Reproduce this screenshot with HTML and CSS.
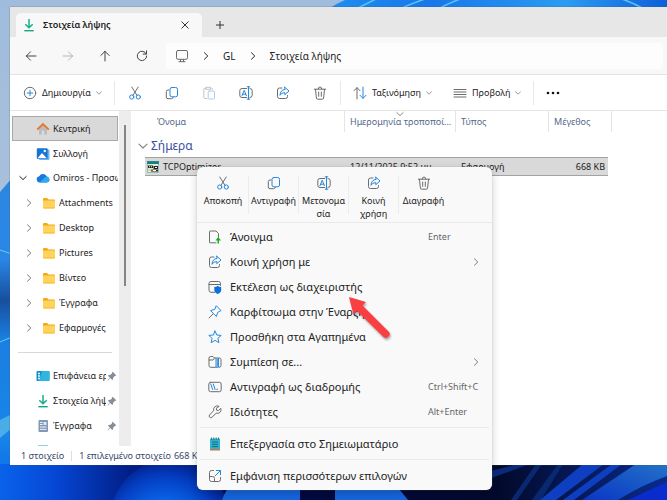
FILE: index.html
```html
<!DOCTYPE html>
<html lang="el">
<head>
<meta charset="utf-8">
<title>Στοιχεία λήψης</title>
<link rel="stylesheet" href="styles.css">
</head>
<body>
<svg class="wallpaper" viewBox="0 0 667 500" preserveAspectRatio="xMidYMid slice" aria-hidden="true">
  <defs>
    <linearGradient id="sky" x1="0" y1="0" x2="0" y2="1"><stop offset="0" stop-color="#9fbcdc"/><stop offset=".4" stop-color="#a9c0da"/></linearGradient>
    <linearGradient id="petalTop" x1="0" x2="1" y1="0" y2="0"><stop offset="0" stop-color="#1e8df0"/><stop offset=".3" stop-color="#1877ea"/><stop offset=".7" stop-color="#2b9cf2"/><stop offset="1" stop-color="#0d5fd8"/></linearGradient>
    <linearGradient id="left" x1="0" y1="0" x2="0" y2="1"><stop offset="0" stop-color="#2c86e0"/><stop offset=".25" stop-color="#2a87e6"/><stop offset=".38" stop-color="#164f9e"/><stop offset=".5" stop-color="#1b7fe0"/><stop offset=".8" stop-color="#1785ea"/><stop offset="1" stop-color="#0a62e4"/></linearGradient>
    <linearGradient id="floor" x1="0" x2="1" y1="0" y2="0"><stop offset="0" stop-color="#0a62ea"/><stop offset=".08" stop-color="#0548d6"/><stop offset=".19" stop-color="#02208a"/><stop offset=".3" stop-color="#010a4a"/><stop offset=".75" stop-color="#020a2c"/><stop offset="1" stop-color="#0a2a8c"/></linearGradient>
    <radialGradient id="orb" cx=".45" cy=".6" r=".6"><stop offset="0" stop-color="#0c8bff"/><stop offset=".35" stop-color="#0a6df2"/><stop offset=".75" stop-color="#0440c4"/><stop offset="1" stop-color="#02208c"/></radialGradient>
    <linearGradient id="blade" x1="0" y1="1" x2="1" y2="0"><stop offset="0" stop-color="#0a35c4"/><stop offset="1" stop-color="#2372c8"/></linearGradient>
  </defs>
  <rect width="667" height="500" fill="url(#sky)"/>
  <path d="M330 8Q345 -2 365 -6H667V8Z" fill="url(#petalTop)"/>
  <path d="M358 8L382 -4M402 8Q420 0 432 -3M440 8Q455 0 470 -4M612 -4Q630 1 642 8" fill="none" stroke="#5cc4f4" stroke-width="1.5"/>
  <path d="M0 192L12 178V500H0Z" fill="url(#left)"/>
  <path d="M0 250L12 254M0 342L12 337" stroke="#5fd0ee" fill="none"/>
  <path d="M0 420L12 414V428L0 438Z" fill="#49aee6"/>
  <rect y="464" width="667" height="36" fill="url(#floor)"/>
  <ellipse cx="170" cy="520" rx="60" ry="60" fill="url(#orb)"/>
  <path d="M222 500Q228 480 250 480L300 488V500ZM335 500V484H395L408 500Z" fill="#1565dc"/>
  <path d="M480 482L530 464H518L480 474Z" fill="#0a2b7c"/>
  <path d="M511 500L536 464H542L517 500ZM532 500L558 464H563L541 500Z" fill="#082970"/>
  <path d="M540 500L583 464H604L556 500ZM563 500L612 464H622L574 500Z" fill="#0d3fc0"/>
  <path d="M582 500L636 464H667V476Q640 486 618 500Z" fill="url(#blade)"/>
  <path d="M628 500L667 482V500Z" fill="#0a2ccc"/>
</svg>

<!-- Shared icon shapes -->
<svg class="sprite" aria-hidden="true">
  <symbol id="i-cut" viewBox="0 0 14 14"><path d="M3.8 1L9 9.4M10.2 1L5 9.4" class="g"/><circle cx="3.7" cy="11" r="2.1" class="b"/><circle cx="10.3" cy="11" r="2.1" class="b"/></symbol>
  <symbol id="i-copy" viewBox="0 0 14 14"><path d="M4 4H3Q1.300 4 1.300 5.700V11Q1.300 12.700 3 12.700H6.500Q8 12.700 8.300 11.200" class="g"/><rect x="5" y="1.500" width="7.500" height="9.300" rx="1.800" class="b"/></symbol>
  <symbol id="i-paste" viewBox="0 0 14 14"><path d="M5 12.500H3Q1.800 12.500 1.800 11.300V3.500Q1.800 2.300 3 2.300H4M8.500 2.300H9.500Q10.500 2.300 10.500 3.500M4 1.300H8.500V3.300H4Z" class="g"/><rect x="6.200" y="5" width="6.300" height="8" rx="1.200" class="b"/></symbol>
  <symbol id="i-rename" viewBox="0 0 14 14"><path d="M7.800 2.500H3Q.8 2.500 .8 4.700V9.300Q.8 11.500 3 11.500H7.800M11 2.500Q13.200 2.500 13.200 4.700V9.300Q13.200 11.500 11 11.500" class="g"/><path d="M3 9.700L5.200 4.300L7.400 9.700M3.700 8.200H6.700M8.200 .8H10.800M9.500 .8V13.200M8.200 13.200H10.800" class="b"/></symbol>
  <symbol id="i-share" viewBox="0 0 14 14"><path d="M6 2H3.500Q1.500 2 1.500 4V10.500Q1.500 12.500 3.500 12.500H9.500Q11.500 12.500 11.500 10.500V9.500" class="g"/><path d="M8.800 1.200L13 5L8.800 8.700V6.600Q5.500 6.500 4 9.300Q4.200 4 8.800 3.400Z" class="b"/></symbol>
  <symbol id="i-delete" viewBox="0 0 14 14"><path d="M1.300 3.200H12.700M5.200 3Q5.200 1 7 1T8.800 3M2.500 3.400L3.400 12Q3.500 13.200 4.700 13.200H9.300Q10.500 13.200 10.600 12L11.500 3.400M5.700 6V10.300M8.300 6V10.300" class="g"/></symbol>
  <symbol id="i-right" viewBox="0 0 8 8"><path d="M2.500 .8L5.800 4L2.500 7.200" class="s"/></symbol>
  <symbol id="i-down" viewBox="0 0 8 8"><path d="M.8 2.500L4 5.600L7.200 2.500" class="s"/></symbol>
  <symbol id="i-download" viewBox="0 0 14 14"><path d="M7 1V9.500M3.300 6.200L7 9.800L10.700 6.200" fill="none" stroke="#14b08a" stroke-width="1.500"/><path d="M2.300 12.700H11.700" stroke="#16a57c" stroke-width="1.400"/></symbol>
  <symbol id="i-folder" viewBox="0 0 14 12"><path d="M1 2Q1 1 2 1H5L6.500 2.500H12Q13 2.500 13 3.500V6H1Z" fill="#f3a912"/><rect x="1" y="3.500" width="12" height="8" rx="1" fill="#ffd35c"/><path d="M1 10.300H13Q13 11.500 12 11.500H2Q1 11.500 1 10.300Z" fill="#f8c243"/></symbol>
  <symbol id="i-pin" viewBox="0 0 10 10"><path d="M5.700 .8L9.200 4.300L8.200 5L7.800 4.900L6.300 6.500L6 8.300L5.200 9L3.200 7L1 9.500L.6 9L2.900 6.700L1 4.800L1.700 4L3.500 3.700L5.100 2.200L5 1.600Z" fill="#848e99"/></symbol>
</svg>

<main class="window">
  <header class="tabs">
    <div class="tab"><svg class="i14"><use href="#i-download"/></svg><span>Στοιχεία λήψης</span>
      <button class="plain close" aria-label="Κλείσιμο καρτέλας"><svg class="i8" viewBox="0 0 8 8"><path d="M.8 .8L7.200 7.200M7.200 .8L.8 7.200" class="s"/></svg></button></div>
    <button class="plain add" aria-label="Νέα καρτέλα"><svg class="i8" viewBox="0 0 8 8"><path d="M4 .2V7.800M.2 4H7.800" class="s"/></svg></button>
  </header>
  <nav class="navbar" aria-label="Περιήγηση">
    <button class="plain nav" aria-label="Πίσω"><svg class="i12" viewBox="0 0 12 12"><path d="M11 6H1.300M5.500 1.800L1.300 6L5.500 10.200" class="s"/></svg></button>
    <button class="plain nav" aria-label="Εμπρός" disabled><svg class="i12" viewBox="0 0 12 12"><path d="M1 6H10.700M6.500 1.800L10.700 6L6.500 10.200" class="s"/></svg></button>
    <button class="plain nav" aria-label="Επάνω"><svg class="i12" viewBox="0 0 12 12"><path d="M6 11V1.300M1.800 5.500L6 1.300L10.200 5.500" class="s"/></svg></button>
    <button class="plain nav" aria-label="Ανανέωση"><svg class="i12" viewBox="0 0 12 12"><path d="M10.300 4A4.700 4.700 0 1 0 10.700 6M10.500 .8V4.100H7.200" class="s"/></svg></button>
    <div class="address">
      <svg class="i14" viewBox="0 0 14 14"><rect x="1.500" y="1.500" width="11" height="8.800" rx="1.500" class="g"/><path d="M5.500 10.500V12.500M8.500 10.500V12.500M4 12.700H10" class="g"/></svg>
      <svg class="i8"><use href="#i-right"/></svg><a href="#">GL</a><svg class="i8"><use href="#i-right"/></svg><a href="#">Στοιχεία λήψης</a>
    </div>
  </nav>
  <div class="commands" role="toolbar">
    <button class="plain new"><svg class="i14" viewBox="0 0 14 14"><circle cx="7" cy="7" r="5.700" class="g"/><path d="M7 4.200V9.800M4.200 7H9.800" class="b"/></svg><span>Δημιουργία</span><svg class="i6"><use href="#i-down"/></svg></button>
    <div class="tools">
      <button class="plain" aria-label="Αποκοπή"><svg class="i14"><use href="#i-cut"/></svg></button>
      <button class="plain" aria-label="Αντιγραφή"><svg class="i14"><use href="#i-copy"/></svg></button>
      <button class="plain" aria-label="Επικόλληση" disabled><svg class="i14"><use href="#i-paste"/></svg></button>
      <button class="plain" aria-label="Μετονομασία"><svg class="i14"><use href="#i-rename"/></svg></button>
      <button class="plain" aria-label="Κοινή χρήση"><svg class="i14"><use href="#i-share"/></svg></button>
      <button class="plain" aria-label="Διαγραφή"><svg class="i14"><use href="#i-delete"/></svg></button>
    </div>
    <div class="views">
      <button class="plain sort"><svg class="i14" viewBox="0 0 14 14"><path d="M4 13V1.700M1 4.700L4 1.700L7 4.700" class="g"/><path d="M10 1V12.300M7 9.300L10 12.300L13 9.300" class="b"/></svg><span>Ταξινόμηση</span><svg class="i6"><use href="#i-down"/></svg></button>
      <button class="plain view"><svg class="i14" viewBox="0 0 14 14"><path d="M1 3.500H13M1 6H13M1 8.500H13M1 11H13" class="g"/></svg><span>Προβολή</span><svg class="i6"><use href="#i-down"/></svg></button>
    </div>
    <button class="plain more" aria-label="Περισσότερα"><svg class="i14" viewBox="0 0 14 14"><g fill="#111"><circle cx="2" cy="7" r="1.300"/><circle cx="7" cy="7" r="1.300"/><circle cx="12" cy="7" r="1.300"/></g></svg></button>
  </div>

  <div class="content">
    <aside class="side">
      <ul class="top">
        <li class="row current"><svg class="i14" viewBox="0 0 14 14"><path d="M3 6.500V12.500H5.700V8.500H8.300V12.500H11V6.500L7 3Z" fill="#b9bcc2"/><path d="M1.200 7.600L7 2L12.800 7.600" fill="none" stroke="#e8762c" stroke-width="1.900"/></svg><a href="#">Κεντρική</a></li>
        <li class="row"><svg class="i14" viewBox="0 0 14 14"><rect x="3" y="2.500" width="10.500" height="10.500" rx="1" fill="#6cb4ee"/><rect x=".8" y="1.200" width="10.800" height="10.800" rx="1" fill="#1673d2"/><path d="M1.500 11.300L6 6L10.800 11.300Z" fill="#fff"/><circle cx="8.800" cy="4" r="1.200" fill="#fff"/></svg><a href="#">Συλλογή</a></li>
      </ul>
      <ul class="tree">
        <li class="row open"><svg class="i8"><use href="#i-down"/></svg><svg class="i14" viewBox="0 0 14 14"><path d="M3.500 11.500A3.200 3.200 0 0 1 3.200 5.200A4.200 4.200 0 0 1 10.600 5.300A3.200 3.200 0 0 1 10.800 11.500Z" fill="#1679dd"/><path d="M3.500 11.500L9 6.200A3.300 3.300 0 0 1 13.700 8.800Q13.500 11.500 10.800 11.500Z" fill="#31a9f2"/></svg><a href="#">Omiros - Προσωπικό</a></li>
        <li class="row child"><svg class="i8"><use href="#i-right"/></svg><svg class="i14"><use href="#i-folder"/></svg><a href="#">Attachments</a></li>
        <li class="row child"><svg class="i8"><use href="#i-right"/></svg><svg class="i14"><use href="#i-folder"/></svg><a href="#">Desktop</a></li>
        <li class="row child"><svg class="i8"><use href="#i-right"/></svg><svg class="i14"><use href="#i-folder"/></svg><a href="#">Pictures</a></li>
        <li class="row child"><svg class="i8"><use href="#i-right"/></svg><svg class="i14"><use href="#i-folder"/></svg><a href="#">Βίντεο</a></li>
        <li class="row child"><svg class="i8"><use href="#i-right"/></svg><svg class="i14"><use href="#i-folder"/></svg><a href="#">Έγγραφα</a></li>
        <li class="row child"><svg class="i8"><use href="#i-right"/></svg><svg class="i14"><use href="#i-folder"/></svg><a href="#">Εφαρμογές</a></li>
      </ul>
      <hr>
      <ul class="pinned">
        <li class="row"><svg class="i14" viewBox="0 0 14 14"><rect x=".5" y="2" width="13" height="10" rx="1" fill="#168fc9"/><path d="M6 2H12.500Q13.500 2 13.500 3V11Q13.500 12 12.500 12H3Z" fill="#2fb5df"/><path d="M2 4.500H4M2 7H4M2 9.500H4" stroke="#e8f8ff" stroke-width="1.300"/></svg><a href="#">Επιφάνεια εργασίας</a><svg class="i10"><use href="#i-pin"/></svg></li>
        <li class="row"><svg class="i14"><use href="#i-download"/></svg><a href="#">Στοιχεία λήψης</a><svg class="i10"><use href="#i-pin"/></svg></li>
        <li class="row"><svg class="i14" viewBox="0 0 14 14"><rect x="2.500" y="1" width="9.500" height="12" rx="1" fill="#8198b6"/><path d="M4 3.500H6.500M4 5.500H6.500M4 8H10.500M4 10.300H10.500" stroke="#f2f6fb"/><rect x="7.500" y="3" width="3" height="3" fill="#dfe9f5"/></svg><a href="#">Έγγραφα</a><svg class="i10"><use href="#i-pin"/></svg></li>
        <li class="row"><svg class="i14" viewBox="0 0 14 14"><rect x="2" y="1" width="10" height="12" fill="#8fd0f3"/></svg></li>
      </ul>
    </aside>
    <div class="track"><div class="thumb"></div></div>
    <section class="files">
      <svg class="i8 sortmark"><use href="#i-down"/></svg>
      <table>
        <colgroup><col class="c-pad"><col class="c-name"><col class="c-date"><col class="c-type"><col class="c-size"><col class="c-end"><col></colgroup>
        <thead><tr><td></td><th class="name">Όνομα</th><th>Ημερομηνία τροποποί...</th><th>Τύπος</th><th class="open-end">Μέγεθος</th><td class="end"></td><td></td></tr></thead>
        <tbody>
          <tr class="group"><th colspan="7"><div><svg class="i10"><use href="#i-down"/></svg><span>Σήμερα</span></div></th></tr>
          <tr class="file"><td></td><td class="first"><div><svg class="i12" viewBox="0 0 12 12"><rect width="12" height="12" fill="#e4e8e2"/><rect width="12" height="3" fill="#12807c"/><path d="M1 4.500H6V7H1ZM6.500 5H11V8H6.500ZM4 8.500H11V10.500H4Z" fill="#222"/><path d="M2 5.800H3M4 5.800H5M8 6.500H10M6 9.500H9" stroke="#fff"/><path d="M1 9H6" stroke="#d4c530"/><rect x=".5" y=".5" width="11" height="11" fill="none" stroke="#3d8f8c" stroke-opacity=".5"/></svg><span>TCPOptimizer</span></div></td><td>12/11/2025 9:52 μμ</td><td>Εφαρμογή</td><td class="last">668 KB</td><td></td><td></td></tr>
        </tbody>
      </table>
    </section>
  </div>
  <footer class="status"><span>1 στοιχείο</span><i></i><span>1 επιλεγμένο στοιχείο</span><span>668 KB</span></footer>
</main>

<div class="menu" role="menu">
  <div class="quick">
    <button class="plain"><svg class="i14"><use href="#i-cut"/></svg><span>Αποκοπή</span></button>
    <button class="plain"><svg class="i14"><use href="#i-copy"/></svg><span>Αντιγραφή</span></button>
    <button class="plain"><svg class="i14"><use href="#i-rename"/></svg><span>Μετονομα<br>σία</span></button>
    <button class="plain"><svg class="i14"><use href="#i-share"/></svg><span>Κοινή<br>χρήση</span></button>
    <button class="plain"><svg class="i14"><use href="#i-delete"/></svg><span>Διαγραφή</span></button>
  </div>
  <div class="items">
    <button class="plain item"><svg class="i14" viewBox="0 0 14 14"><path d="M8 12.800H2Q1.500 12.800 1.500 12.300V1.500Q1.500 1 2 1H8L10.500 3.500V7" class="g"/><path d="M9.500 13.500V10.500H7.500L10.200 7L13 10.500H11V13.500Z" fill="#16b01c"/></svg><span>Άνοιγμα</span><kbd>Enter</kbd></button>
    <button class="plain item"><svg class="i14"><use href="#i-share"/></svg><span>Κοινή χρήση με</span><svg class="i8 sub"><use href="#i-right"/></svg></button>
    <button class="plain item"><svg class="i14" viewBox="0 0 14 14"><path d="M6.500 12.300H3Q1 12.300 1 10.300V3.500Q1 1.500 3 1.500H10.500Q12.500 1.500 12.500 3.500V5.500M1 4.500H12.500" class="g"/><path d="M9.700 5.700Q11 7 13.200 7V10Q13.200 12.700 9.700 14Q6.300 12.700 6.300 10V7Q8.500 7 9.700 5.700Z" fill="#0b71dc"/></svg><span>Εκτέλεση ως διαχειριστής</span></button>
    <button class="plain item"><svg class="i14" viewBox="0 0 14 14"><path d="M8.500 1L13 5.500L9.600 7.500L8.400 11.500L2.500 5.600L6.500 4.400Z" class="b"/><path d="M5.200 8.800L1 13" class="g"/></svg><span>Καρφίτσωμα στην Έναρξη</span></button>
    <button class="plain item"><svg class="i14" viewBox="0 0 14 14"><path d="M7 1L8.800 5L13.200 5.400L9.900 8.300L10.900 12.700L7 10.400L3.100 12.700L4.100 8.300L.8 5.400L5.200 5Z" class="b"/></svg><span>Προσθήκη στα Αγαπημένα</span></button>
    <button class="plain item"><svg class="i14" viewBox="0 0 14 14"><path d="M7.500 12.300H2.700Q1 12.300 1 10.600V3.200Q1 1.500 2.700 1.500H5L6.500 3H11.300Q13 3 13 4.700V10.600Q13 12.300 11.300 12.300M1 5H5L6.500 3" class="g"/><path d="M8 3.500V12.300H10.500V3.500M9.300 4V12" class="b" stroke-dasharray="2 .7"/></svg><span>Συμπίεση σε...</span><svg class="i8 sub"><use href="#i-right"/></svg></button>
    <button class="plain item"><svg class="i14" viewBox="0 0 14 14"><rect x=".8" y="2.300" width="12.400" height="9.400" rx="1.800" class="g"/><path d="M2.800 4L4.600 9.500M5.300 4L7.100 9.500M8.700 9.300H9.500" class="b"/></svg><span>Αντιγραφή ως διαδρομής</span><kbd>Ctrl+Shift+C</kbd></button>
    <button class="plain item"><svg class="i14" viewBox="0 0 14 14"><path d="M10.800 1.200A3.700 3.700 0 0 0 5.700 5.600L1.500 10Q.7 11.200 1.600 12.200Q2.700 13.200 3.900 12.300L8.200 8.200A3.700 3.700 0 0 0 12.800 3.300L10.500 5.500L8.600 5.200L8.400 3.500Z" class="g"/></svg><span>Ιδιότητες</span><kbd>Alt+Enter</kbd></button>
    <hr>
    <button class="plain item"><svg class="i14" viewBox="0 0 14 14"><rect x="2" y="1.500" width="10" height="11" rx="1" fill="#32b3cd"/><path d="M2 12H12V13.500H2Z" fill="#c97745"/><path d="M4 5H10M4 7.300H10M4 9.600H10" stroke="#126b88"/><path d="M3.500 .5V3M5.800 .5V3M8.200 .5V3M10.500 .5V3" stroke="#247c91"/></svg><span>Επεξεργασία στο Σημειωματάριο</span></button>
    <hr>
    <button class="plain item"><svg class="i14" viewBox="0 0 14 14"><path d="M5.500 1.500H3.500Q1.500 1.500 1.500 3.500V10.500Q1.500 12.500 3.500 12.500H10.500Q12.500 12.500 12.500 10.500V8.500M1.500 7.500H4.500Q6.500 7.500 6.500 9.500V12.500" class="g"/><path d="M8.300 1.500H12.500V5.700M12.300 1.700L7 7" class="b"/></svg><span>Εμφάνιση περισσότερων επιλογών</span></button>
  </div>
</div>

<svg class="arrow" viewBox="0 0 48 48" aria-hidden="true"><path d="M3 3L20 8L16.500 11.500L43 38Q45 40.500 42.500 42.500Q40 45 37.500 43L11 17L7.500 20.500Z" fill="#f93f41"/></svg>
</body>
</html>
```

FILE: styles.css
```css
* { box-sizing: border-box; }

body {
  margin: 0;
  min-height: 100vh;
  padding: 7px 0 35px 10px;
  display: flex;
  position: relative;
  overflow: hidden;
  font: 9px/14px "Noto Sans", "Open Sans", sans-serif;
  color: #222;
}

.wallpaper { position: absolute; inset: 0; width: 100%; height: 100%; z-index: -1; }
.sprite { position: absolute; width: 0; height: 0; }

svg { flex: none; display: block; }
.g, .b, .s { fill: none; stroke-linecap: round; stroke-linejoin: round; }
.g { stroke: #6c6c6c; }
.b { stroke: #2488e0; }
.s { stroke: currentColor; }
.i6 { width: 6px; height: 6px; }
.i8 { width: 8px; height: 8px; }
.i10 { width: 10px; height: 10px; }
.i12 { width: 12px; height: 12px; }
.i14 { width: 14px; height: 14px; }

.plain {
  border: 0;
  padding: 0;
  background: none;
  font: inherit;
  color: inherit;
  display: flex;
  align-items: center;
  white-space: nowrap;
}
a { color: inherit; text-decoration: none; }
ul { list-style: none; margin: 0; padding: 0; }

.window {
  flex: 1;
  min-width: 0;
  display: flex;
  flex-direction: column;
  background: #fff;
  box-shadow: 0 0 1px #555;
}

.tabs { display: flex; background: #e7e7e7; height: 30px; padding: 6px 0 0 6px; }
.tab {
  width: 186px;
  display: flex;
  align-items: center;
  padding: 0 13px 0 6px;
  gap: 7px;
  background: #f8f8f8;
  border-radius: 5px 5px 0 0;
  font-weight: 600;
}
.close { margin-left: auto; color: #333; }
.add { padding-left: 14px; color: #333; }

.navbar { display: flex; align-items: center; background: #f8f8f8; height: 38px; padding: 0 4px 0 2px; border-bottom: 1px solid #e3e3e3; }
.nav { width: 37px; height: 26px; justify-content: center; color: #444; }
.nav:disabled { color: #b5b5b5; }
.address {
  flex: 1;
  display: flex;
  align-items: center;
  gap: 13px;
  height: 26px;
  margin-left: 6px;
  padding-left: 9px;
  background: #fdfdfd;
  border-radius: 4px;
  font-size: 10px;
}

.commands { display: flex; align-items: center; height: 36px; padding-left: 13px; border-bottom: 1px solid #e5e5e5; }
.commands > * { height: 24px; }
.new, .sort, .view { gap: 5px; }
.new > .i6, .sort > .i6, .view > .i6 { color: #777; }
.new { width: 92px; border-right: 1px solid #e8e8e8; }
.tools { display: flex; width: 226px; padding-left: 1px; border-right: 1px solid #e8e8e8; }
.tools > button { width: 37px; justify-content: center; }
.tools > button:disabled { opacity: .4; }
.views { display: flex; width: 193px; padding-left: 12px; border-right: 1px solid #e8e8e8; }
.sort { width: 100px; }
.more { padding-left: 12px; }

.content { flex: 1; display: flex; min-height: 0; overflow: hidden; }
.side { width: 109px; height: 335px; overflow: hidden; padding: 5px 0 0 2px; }
.row { display: flex; align-items: center; gap: 3px; height: 25px; padding-left: 24px; overflow: hidden; white-space: nowrap; margin-right: 1px; }
.row > a { overflow: hidden; }
.current { background: #d9d9d9; border: 1px solid #a8a8a8; padding-left: 23px; }
.tree { margin-top: -1px; }
.open { padding-left: 7px; }
.child { padding-left: 13px; }
.open > .i8, .child > .i8 { margin-right: 6px; }
.child > .i8 { color: #777; }
.side hr { margin: 12px 7px 10px 6px; border: 0; border-top: 1px solid #d8d8d8; }
.pinned a { flex: 1; }
.pinned .row { margin-right: 2px; }
.pinned .i10 { margin-left: -2px; }

.track { width: 12px; height: 335px; background: #ededed; display: flex; justify-content: center; padding-top: 14px; }
.thumb { width: 2px; height: 161px; background: #858585; }

.files { flex: 1; min-width: 0; position: relative; }
.sortmark { position: absolute; left: 265px; top: -1px; color: #888; }
table { width: 100%; table-layout: fixed; border-collapse: separate; border-spacing: 0; }
.c-pad { width: 14px; }
.c-name { width: 200px; }
.c-date { width: 111px; }
.c-type { width: 93px; }
.c-size { width: 59px; }
.c-end { width: 4px; }
td, th { padding: 0 0 0 5px; text-align: left; font-weight: 400; white-space: nowrap; overflow: hidden; }
thead { color: #54698a; }
thead th, thead td { height: 21px; }
thead th { border-right: 1px solid #e5e5e5; }
thead .name { padding-left: 12px; }
thead .open-end { border-right: 0; }
thead .end { border-right: 1px solid #e5e5e5; }
.group th { height: 25px; padding: 2px 0 0 7px; color: #3b4f9f; font-size: 12px; }
.group div, .file div { display: flex; align-items: center; gap: 3px; }
.group svg { color: #888; }
.file td { height: 19px; }
.file td:nth-child(n+2):nth-child(-n+5) { background: #d9d9d9; border: solid #a3a3a3; border-width: 1px 0; }
.file td.first { border-left-width: 1px; padding-left: 2px; }
.file td.last { border-right-width: 1px; padding: 0 3px 0 0; text-align: right; }
.file div { gap: 4px; }

.status { display: flex; align-items: center; height: 19px; padding-left: 11px; color: #34496b; white-space: nowrap; }
.status i { width: 1px; height: 10px; background: #ddd; margin: 0 7px; }
.status span + span { margin-left: 3px; }

.menu {
  position: absolute;
  left: 197px;
  top: 167px;
  width: 295px;
  background: #f9f9f9;
  border-radius: 6px;
  box-shadow: 0 0 1px #999, 0 3px 8px #0003;
  font-size: 11px;
}
.quick { display: flex; height: 56px; padding: 9px 0 0 1px; border-bottom: 1px solid #e9e9e9; font-size: 9px; line-height: 13px; }
.quick button { flex-direction: column; gap: 4px; width: 50px; height: 38px; text-align: center; }
.quick button + button { border-left: 1px solid #ececec; }
.items { padding: 1px 0 2px; }
.item { width: 100%; height: 25px; padding: 0 12px 0 11px; gap: 8px; text-align: left; }
.item > kbd { margin-left: auto; width: 52px; font: inherit; font-size: 9px; color: #666; }
.item > .sub { margin-left: auto; color: #777; }
.items hr { margin: 3px; border: 0; border-top: 1px solid #e9e9e9; }

.arrow { position: absolute; left: 346px; top: 294px; width: 48px; height: 48px; filter: drop-shadow(1px 2px 1px #0005); }
```
